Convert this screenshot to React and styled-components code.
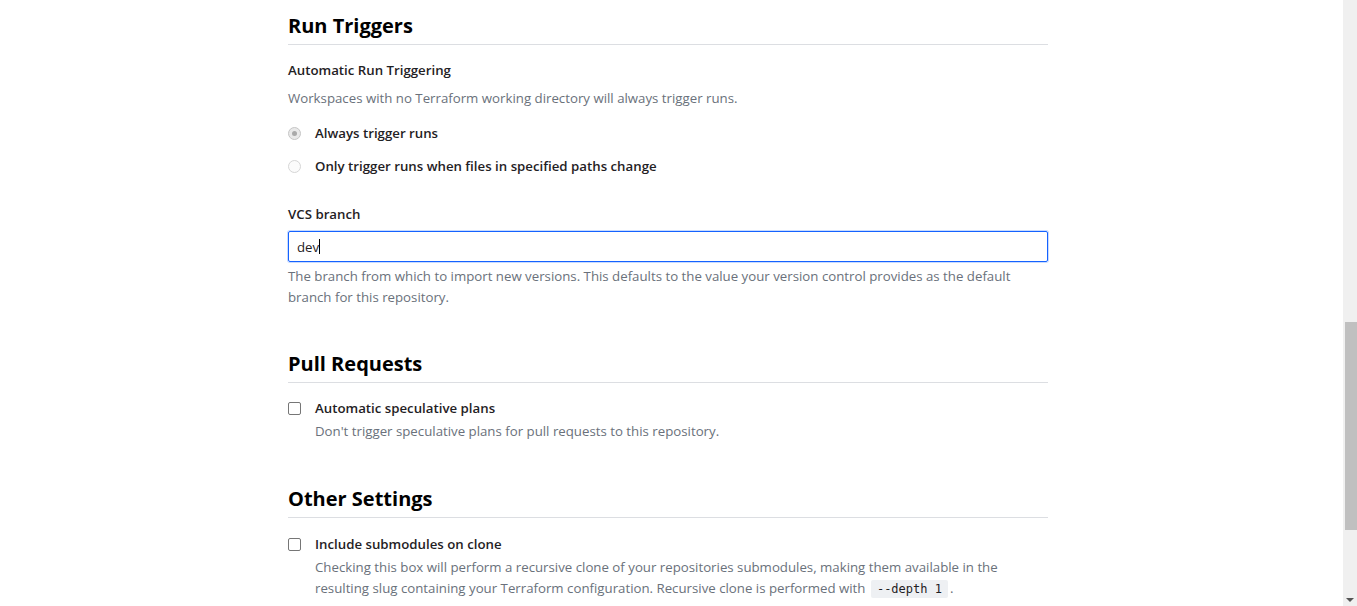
import React from 'react';
import styled, { createGlobalStyle } from 'styled-components';

const GlobalStyle = createGlobalStyle`
  html, body {
    margin: 0;
    padding: 0;
    background: #fff;
    overflow: hidden;
  }
  body {
    font-family: "Open Sans", "Noto Sans", "Liberation Sans", sans-serif;
    color: #1f2124;
  }
`;

const Page = styled.div`
  display: flex;
  height: 606px;
  overflow: hidden;
`;

const Main = styled.div`
  flex: 1;
  padding-left: 288px;
`;

const Content = styled.div`
  width: 760px;
`;

const Scrollbar = styled.div`
  width: 14px;
  background: #f0f0f0;
  display: flex;
  flex-direction: column;
  padding-top: 322px;
  box-sizing: border-box;
  align-items: flex-end;
`;

const Thumb = styled.div`
  width: 12px;
  height: 208px;
  background: #c0c0c0;
`;

const Arrow = styled.div`
  margin-top: auto;
  margin-bottom: 4px;
  align-self: center;
  width: 0;
  height: 0;
  border-left: 4px solid transparent;
  border-right: 4px solid transparent;
  border-top: 4px solid #555;
`;

const Section = styled.section`
  padding-top: ${(p) => p.$top}px;
`;

const SectionTitle = styled.h2`
  margin: 0;
  font-size: 20px;
  line-height: 28px;
  font-weight: 700;
  color: #000;
  padding-bottom: 4px;
  border-bottom: 1px solid #dcdee2;
`;

const FieldLabel = styled.div`
  font-size: 13.25px;
  font-weight: 600;
  line-height: 20px;
  color: #1f2124;
  margin-top: ${(p) => p.$mt || 0}px;
`;

const Help = styled.p`
  margin: ${(p) => p.$mt || 0}px 0 0 ${(p) => p.$indent || 0}px;
  font-size: 13.25px;
  line-height: 21px;
  color: #6a717b;
`;

const Option = styled.label`
  display: flex;
  align-items: center;
  gap: 14px;
  height: 20px;
  margin-top: ${(p) => p.$mt}px;
  font-size: 13.25px;
  font-weight: 600;
  color: #1f2124;
`;

const Radio = styled.span`
  width: 11px;
  height: 11px;
  border-radius: 50%;
  border: 1px solid ${(p) => (p.$checked ? '#c6c6c6' : '#d6d6d6')};
  background: ${(p) => (p.$checked ? '#e9e9e9' : '#fbfbfb')};
  display: flex;
  align-items: center;
  justify-content: center;
  flex-shrink: 0;

  &::after {
    content: '';
    width: 5px;
    height: 5px;
    border-radius: 50%;
    background: ${(p) => (p.$checked ? '#a9a9a9' : 'transparent')};
  }
`;

const Checkbox = styled.span`
  width: 11px;
  height: 11px;
  border: 1px solid #767676;
  border-radius: 2px;
  background: #fff;
  flex-shrink: 0;
`;

const Input = styled.div`
  margin-top: 7px;
  height: 31px;
  box-sizing: border-box;
  border: 1px solid #1563ff;
  border-radius: 2px;
  box-shadow: 0 0 0 1px #c9dbff;
  display: flex;
  align-items: center;
  padding-left: 8px;
  font-size: 13.25px;
  color: #1f2124;
`;

const Caret = styled.span`
  display: inline-block;
  width: 1px;
  height: 15px;
  background: #000;
`;

const Code = styled.code`
  font-family: "DejaVu Sans Mono", "Liberation Mono", monospace;
  font-size: 12px;
  background: #eef0f3;
  color: #1f2124;
  padding: 2px 6px;
  margin: 0 2px;
  border-radius: 2px;
`;

export default function App() {
  return (
    <Page>
      <GlobalStyle />
      <Main>
        <Content>
          <Section $top={12}>
            <SectionTitle>Run Triggers</SectionTitle>
            <FieldLabel $mt={15}>Automatic Run Triggering</FieldLabel>
            <Help $mt={8}>Workspaces with no Terraform working directory will always trigger runs.</Help>
            <Option $mt={14}>
              <Radio $checked />
              Always trigger runs
            </Option>
            <Option $mt={13}>
              <Radio />
              Only trigger runs when files in specified paths change
            </Option>
            <FieldLabel $mt={28}>VCS branch</FieldLabel>
            <Input>
              dev<Caret />
            </Input>
            <Help $mt={4}>
              The branch from which to import new versions. This defaults to the value your version control
              provides as the default branch for this repository.
            </Help>
          </Section>

          <Section $top={42}>
            <SectionTitle>Pull Requests</SectionTitle>
            <Option $mt={15}>
              <Checkbox />
              Automatic speculative plans
            </Option>
            <Help $mt={3} $indent={27}>
              Don't trigger speculative plans for pull requests to this repository.
            </Help>
          </Section>

          <Section $top={43}>
            <SectionTitle>Other Settings</SectionTitle>
            <Option $mt={16}>
              <Checkbox />
              Include submodules on clone
            </Option>
            <Help $mt={3} $indent={27}>
              Checking this box will perform a recursive clone of your repositories submodules, making them
              available in the resulting slug containing your Terraform configuration. Recursive clone is
              performed with <Code>--depth 1</Code>.
            </Help>
          </Section>
        </Content>
      </Main>
      <Scrollbar>
        <Thumb />
        <Arrow />
      </Scrollbar>
    </Page>
  );
}
